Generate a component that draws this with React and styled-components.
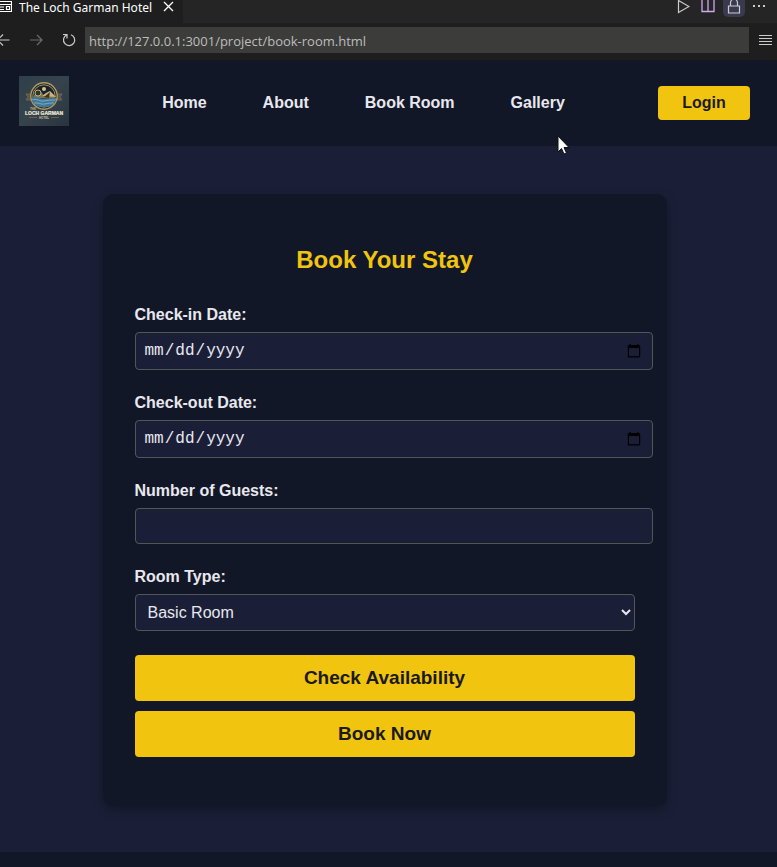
import React from "react";
import styled, { createGlobalStyle, css } from "styled-components";

const colors = {
  page: "#1a1f37",
  panel: "#121728",
  gold: "#f1c40f",
  ink: "#1a1a1a",
  text: "#e8e8ee",
  border: "#555555",
};

const GlobalStyle = createGlobalStyle`
  *, *::before, *::after { box-sizing: border-box; }
  html { background: ${colors.panel}; }
  body {
    margin: 0;
    color: ${colors.text};
    font-family: "Liberation Sans", Arial, sans-serif;
    font-size: 16px;
  }
`;

const Page = styled.div`
  position: relative;
  display: flex;
  flex-direction: column;
  min-height: 100vh;
`;

/* Preview window chrome */
const TabStrip = styled.div`
  display: flex;
  justify-content: space-between;
  height: 23px;
  background: #252526;
`;

const Tab = styled.div`
  display: flex;
  align-items: flex-start;
  gap: 7px;
  padding-right: 6px;
  background: #1e1e1e;
  color: #ffffff;
  font: 12px/16px "Noto Sans", sans-serif;
`;

const TabTitle = styled.span`
  white-space: nowrap;
`;

const IconButton = styled.button`
  display: flex;
  align-items: center;
  justify-content: center;
  width: ${(p) => p.$width || 20}px;
  height: ${(p) => p.$height || 20}px;
  flex: none;
  padding: 0;
  border: 0;
  background: none;
  color: ${(p) => (p.$dim ? "#6b6b6b" : "#cccccc")};
  ${(p) =>
    p.$active &&
    css`
      background: #393a50;
      border-radius: 0 0 5px 5px;
    `}
`;

const TabActions = styled.div`
  display: flex;
  align-items: flex-start;
  gap: 4px;
  padding-right: 8px;
`;

const AddressRow = styled.div`
  display: flex;
  align-items: center;
  height: 37px;
  padding: 4px 2px 7px 0;
  background: #1e1e1e;
`;

const NavButtons = styled.div`
  display: flex;
  align-items: center;
  gap: 14px;
  width: 85px;
  flex: none;
`;

const AddressInput = styled.input`
  flex: 1;
  min-width: 0;
  height: 26px;
  margin-right: 6px;
  padding: 2px 4px 0;
  border: 0;
  background: #3c3c3b;
  color: #bdbdbd;
  font: 13px "Open Sans", sans-serif;
  outline: none;
`;

/* Site */
const Header = styled.header`
  display: flex;
  align-items: center;
  justify-content: space-between;
  height: 86px;
  padding: 0 27px 0 19px;
  background: ${colors.panel};
`;

const HomeLink = styled.a`
  display: flex;
  padding-bottom: 4px;
`;

const Menu = styled.nav`
  display: flex;
  gap: 56px;
`;

const MenuLink = styled.a`
  color: ${colors.text};
  font-weight: 700;
  line-height: 20px;
  text-decoration: none;
  white-space: nowrap;
`;

const GoldButton = styled.button`
  border: 0;
  border-radius: 4px;
  background: ${colors.gold};
  color: ${colors.ink};
  font-family: inherit;
  font-weight: 700;
`;

const LoginButton = styled(GoldButton)`
  width: 92px;
  height: 34px;
  padding: 0;
  font-size: 16px;
`;

const SubmitButton = styled(GoldButton)`
  width: 100%;
  height: 46px;
  font-size: 19px;
`;

const Main = styled.main`
  display: flex;
  flex-direction: column;
  align-items: center;
  padding: 48px 8px 46px 0;
  background: ${colors.page};
`;

const Card = styled.section`
  width: 100%;
  max-width: 564px;
  padding: 50px 32px 49px;
  border-radius: 10px;
  background: ${colors.panel};
  box-shadow: 0 4px 12px rgba(0, 0, 0, 0.3);
`;

const Title = styled.h1`
  margin: 0 0 28px;
  color: ${colors.gold};
  font-size: 24px;
  line-height: 32px;
  text-align: center;
`;

const Form = styled.form`
  display: flex;
  flex-direction: column;
`;

const Field = styled.div`
  display: flex;
  flex-direction: column;
  gap: 6px;
  margin-bottom: 22px;
`;

const Label = styled.label`
  font-weight: 700;
  line-height: 22px;
`;

const control = css`
  border: 1px solid ${colors.border};
  border-radius: 4px;
  background: ${colors.page};
  color: ${colors.text};
  font-size: 16px;
  outline: none;
`;

const Input = styled.input`
  ${control}
  width: calc(100% + 18px);
  height: ${(p) => (p.type === "date" ? 38 : 36)}px;
  padding: 8px;
  font-family: ${(p) =>
    p.type === "date" ? '"Courier New", "Liberation Mono", monospace' : "inherit"};
`;

const Select = styled.select`
  ${control}
  width: 100%;
  height: 37px;
  padding: 8px;
  font-family: inherit;
`;

const Actions = styled.div`
  display: flex;
  flex-direction: column;
  gap: 10px;
  padding-top: 2px;
`;

const Footer = styled.footer`
  flex: 1;
  background: ${colors.panel};
`;

const Pointer = styled.svg`
  position: absolute;
  left: 557px;
  top: 135px;
  pointer-events: none;
`;

const StrokeIcon = styled.svg`
  fill: none;
  stroke: currentColor;
  stroke-width: 1.2;
`;

function Logo() {
  return (
    <svg width="50" height="50" viewBox="0 0 50 50" role="img" aria-label="The Loch Garman Hotel">
      <defs>
        <linearGradient id="slate" x2="1" y2="1">
          <stop stopColor="#2f3f49" />
          <stop offset=".5" stopColor="#36434c" />
          <stop offset="1" stopColor="#28343f" />
        </linearGradient>
        <clipPath id="seal"><circle cx="25" cy="20" r="12.5" /></clipPath>
      </defs>
      <path fill="url(#slate)" d="M0 0h50v50H0z" />
      <path d="M7 18h7v6H7l2-3zM36 18h7l-2 3 2 3h-7z" fill="#5a5546" stroke="#857b60" strokeWidth=".6" />
      <circle cx="25" cy="20" r="13.200" fill="#17242b" stroke="#b39a62" strokeWidth="1.400" />
      <circle cx="25" cy="20" r="11.200" fill="none" stroke="#a89260" strokeWidth="1" />
      <g clipPath="url(#seal)">
        <circle cx="25" cy="13" r="2" fill="#dfc08b" />
        <path d="M14 22c3-8 7-9 9-5l3 4 5-5 6 7z" fill="#7e7452" />
        <path d="m23 20 4-3 4-2 6 6z" fill="#d0b080" />
        <path d="m25 21 6-5-1 6z" fill="#37342a" />
        <circle cx="19" cy="17" r="3" fill="#253830" stroke="#c8ad71" />
        <path d="M12 22c5-3 8 1 13 1s7-1 13-1v6c-5 4-20 4-26 0z" fill="#3f789b" />
        <path d="M13 24c5-2 8 2 12 1s7-1 12-1M15 27c4-1 7 2 11 1s6-1 9-1" fill="none" stroke="#9cc0cb" strokeWidth=".7" />
      </g>
      <text x="11" y="34" fontSize="3" fill="#c0ad7e" fontWeight="700">THE</text>
      <text x="25" y="39" textAnchor="middle" fontFamily="Liberation Sans, sans-serif" fontSize="5" fontWeight="700" fill="#f0ead8" stroke="#f0ead8" strokeWidth=".2">LOCH GARMAN</text>
      <text x="25" y="43" textAnchor="middle" fontSize="3" fontWeight="700" fill="#c8bfa4">HOTEL</text>
      <path d="M10 41.500h8M32 41.500h8" stroke="#98774c" strokeWidth=".6" />
    </svg>
  );
}

function WindowChrome() {
  return (
    <>
      <TabStrip>
        <Tab>
          <StrokeIcon width="12" height="14" viewBox="4 0 12 14">
            <path d="M2 1.500h13.500v10H2zM2 4.500h13.500M4 7h4M4 9.500h4M10.500 6.500h3v3h-3z" />
          </StrokeIcon>
          <TabTitle>The Loch Garman Hotel</TabTitle>
          <IconButton $width={18} $height={13} aria-label="Close tab">
            <svg width="11" height="11" viewBox="0 0 11 11" fill="none" stroke="#fff" strokeWidth="1.300">
              <path d="m1 1 9 9M10 1 1 10" />
            </svg>
          </IconButton>
        </Tab>
        <TabActions>
          <IconButton $height={14} aria-label="Run">
            <StrokeIcon width="13" height="14" viewBox="0 0 13 14">
              <path d="M1.500 .5v12L12 6.500z" />
            </StrokeIcon>
          </IconButton>
          <IconButton $width={22} $height={13} aria-label="Split view">
            <svg width="14" height="13" viewBox="0 0 14 13" fill="none" stroke="#cdaaf0" strokeWidth="1.300">
              <path d="M1-2v13.500h12V-2M7-2v13.500" />
            </svg>
          </IconButton>
          <IconButton $active $height={17} $width={22} aria-label="Lock group">
            <StrokeIcon width="14" height="17" viewBox="0 0 14 17">
              <path d="M1.500 6h11v7h-11zM3.500 6V3a3.500 4 0 0 1 7 0v3" />
            </StrokeIcon>
          </IconButton>
          <IconButton $height={12} aria-label="More actions">
            <svg width="14" height="12" viewBox="0 0 14 12" fill="currentColor">
              <path d="M1 5h2v2H1zM6 5h2v2H6zM11 5h2v2h-2z" />
            </svg>
          </IconButton>
        </TabActions>
      </TabStrip>
      <AddressRow>
        <NavButtons>
          <IconButton $width={10} aria-label="Back">
            <StrokeIcon width="10" height="14" viewBox="3 0 10 14">
              <path d="M12.500 7H.5M6 1.500.5 7 6 12.500" />
            </StrokeIcon>
          </IconButton>
          <IconButton $dim $width={24} aria-label="Forward">
            <StrokeIcon width="14" height="14" viewBox="0 0 14 14">
              <path d="M1 7h12M8 2l5 5-5 5" />
            </StrokeIcon>
          </IconButton>
          <IconButton $width={14} aria-label="Reload">
            <StrokeIcon width="14" height="14" viewBox="0 0 14 14">
              <path d="M4.500 2A5.600 5.600 0 1 0 9 1.700M1 1.500h4v4" />
            </StrokeIcon>
          </IconButton>
        </NavButtons>
        <AddressInput
          aria-label="Address"
          defaultValue="http://127.0.0.1:3001/project/book-room.html"
        />
        <IconButton aria-label="Menu">
          <svg width="13" height="12" viewBox="0 0 13 12" stroke="currentColor">
            <path d="M0 1.500h13M0 4.500h13M0 7.500h13M0 10.500h13" />
          </svg>
        </IconButton>
      </AddressRow>
    </>
  );
}

export default function App() {
  return (
    <Page>
      <GlobalStyle />
      <WindowChrome />
      <Header>
        <HomeLink href="#home"><Logo /></HomeLink>
        <Menu>
          {["Home", "About", "Book Room", "Gallery"].map((name) => (
            <MenuLink key={name} href={"#" + name.toLowerCase().replace(" ", "-")}>{name}</MenuLink>
          ))}
        </Menu>
        <LoginButton>Login</LoginButton>
      </Header>
      <Main>
        <Card>
          <Title>Book Your Stay</Title>
          <Form onSubmit={(e) => e.preventDefault()}>
            <Field>
              <Label htmlFor="checkin">Check-in Date:</Label>
              <Input id="checkin" type="date" />
            </Field>
            <Field>
              <Label htmlFor="checkout">Check-out Date:</Label>
              <Input id="checkout" type="date" />
            </Field>
            <Field>
              <Label htmlFor="guests">Number of Guests:</Label>
              <Input id="guests" type="number" min="1" />
            </Field>
            <Field>
              <Label htmlFor="room">Room Type:</Label>
              <Select id="room">
                <option>Basic Room</option>
              </Select>
            </Field>
            <Actions>
              <SubmitButton type="button">Check Availability</SubmitButton>
              <SubmitButton type="submit">Book Now</SubmitButton>
            </Actions>
          </Form>
        </Card>
      </Main>
      <Footer />
      <Pointer width="13" height="20" viewBox="0 0 13 20" aria-hidden="true">
        <path d="M1 1v16l3.500-3.500 2.500 5.500 2.500-1-2.500-5.500h5z" fill="#fff" stroke="#111" />
      </Pointer>
    </Page>
  );
}
